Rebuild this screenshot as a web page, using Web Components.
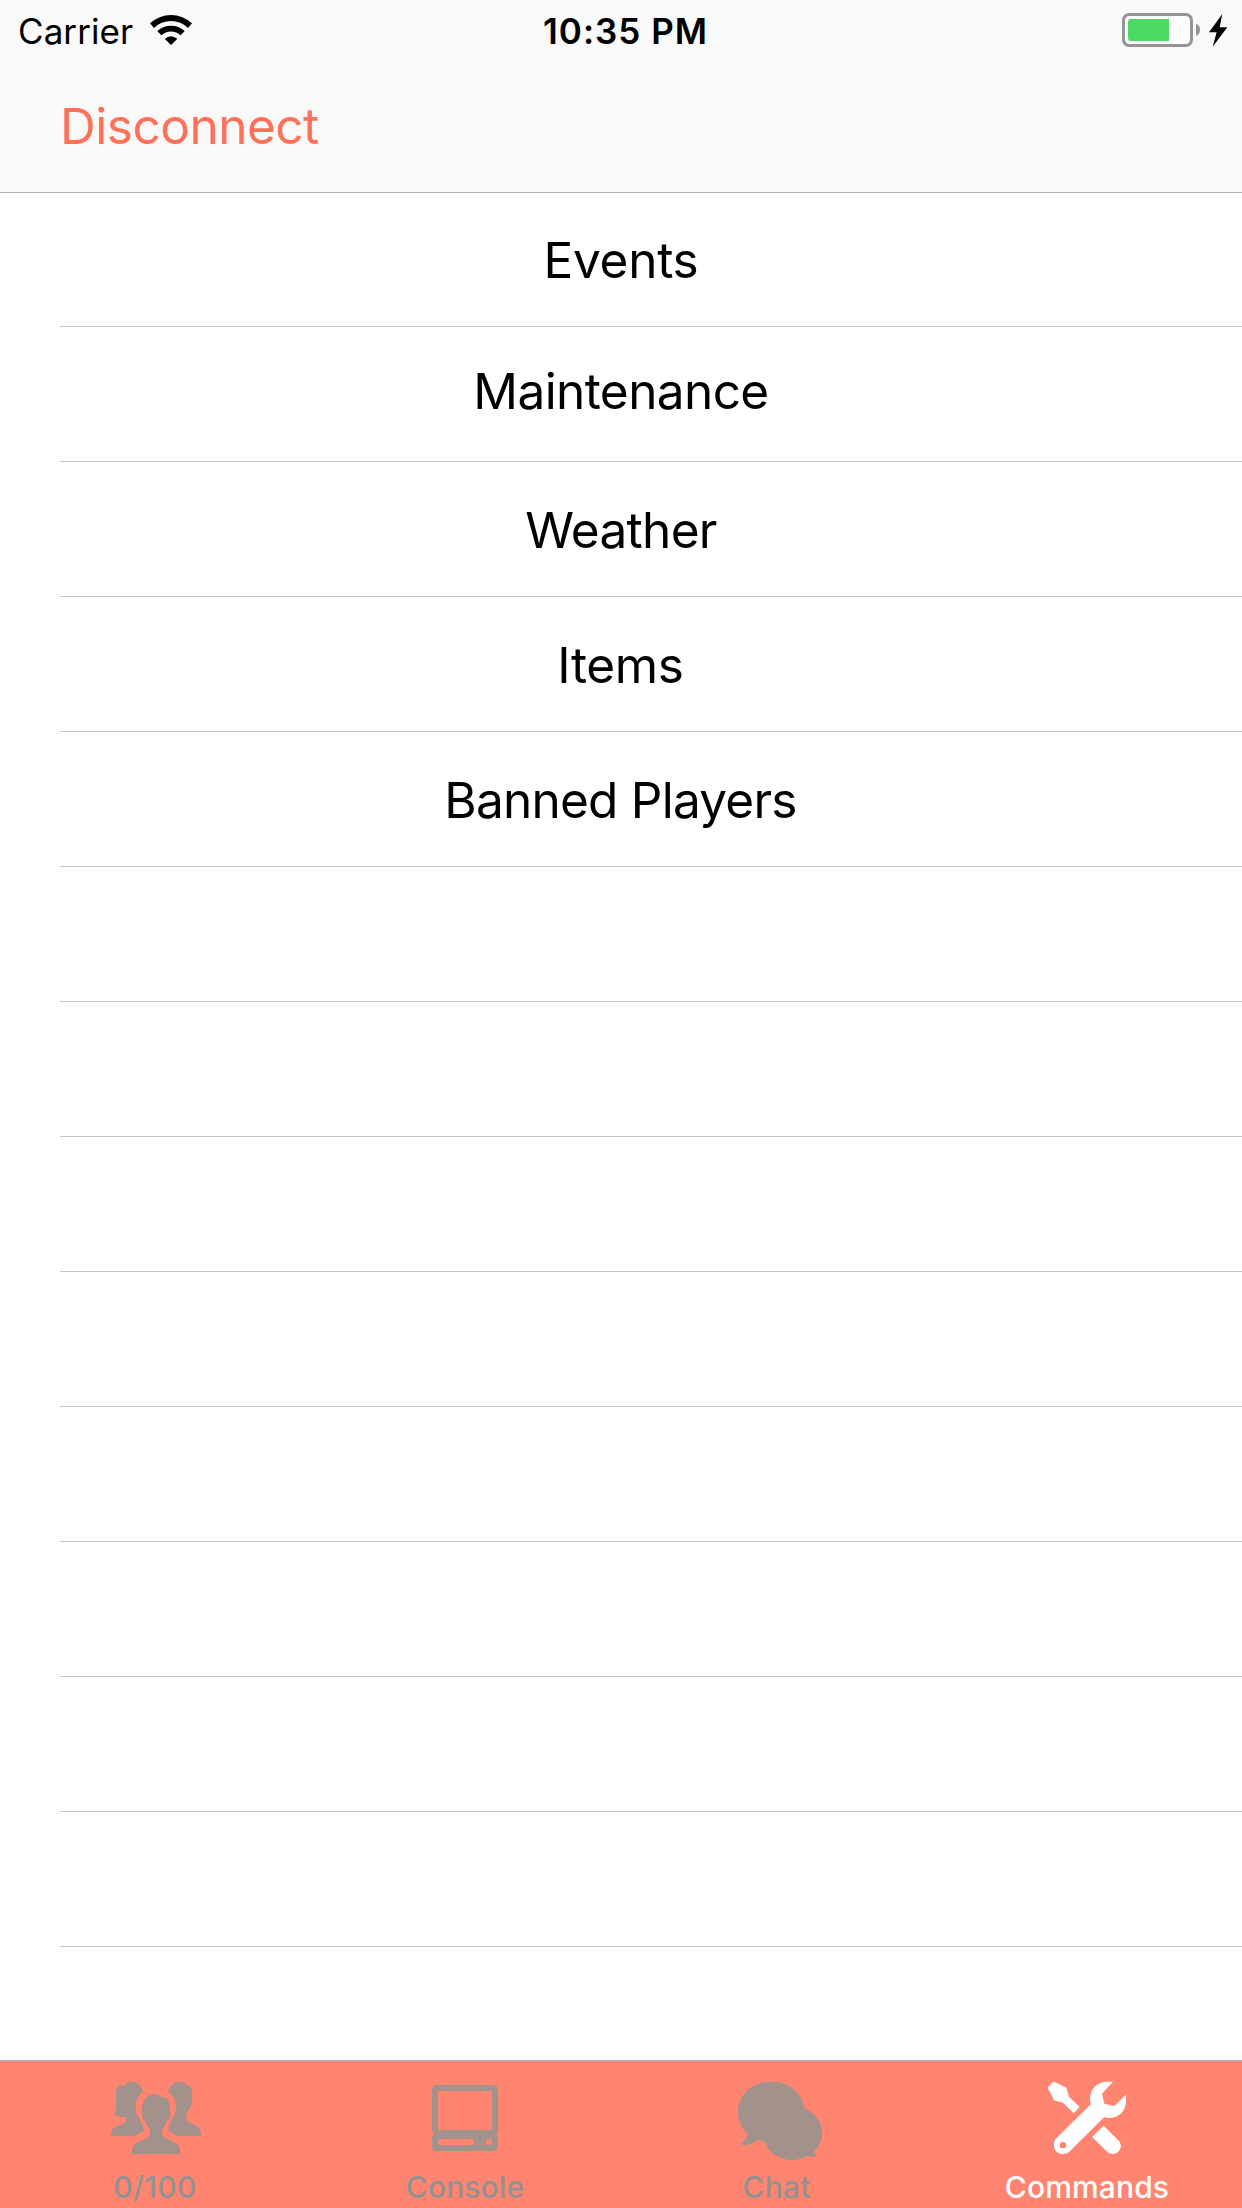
<!DOCTYPE html>
<html lang="en">
<head>
<meta charset="utf-8">
<title>Commands</title>
<style>
body{margin:0;background:#fff;color:#000;font-family:Inter,"Liberation Sans",sans-serif}
</style>
</head>
<body>
<app-screen>
  <status-bar slot="top" carrier="Carrier" time="10:35 PM"></status-bar>
  <nav-bar slot="top">Disconnect</nav-bar>
  <list-row style="--h:134px;--pad:37px;--ls:-.284px">Events</list-row>
  <list-row style="--pad:34px;--ls:-.588px">Maintenance</list-row>
  <list-row style="--ls:-.67px">Weather</list-row>
  <list-row style="--ls:-.36px;--end:61px">Items</list-row>
  <list-row style="--ls:-.753px;--end:61px">Banned Players</list-row>
  <list-row></list-row><list-row></list-row><list-row></list-row><list-row></list-row>
  <list-row></list-row><list-row></list-row><list-row></list-row><list-row></list-row>
  <tab-bar slot="bottom">
    <tab-item icon="people" style="--ls:.357px">0/100</tab-item>
    <tab-item icon="console" style="--ls:.12px">Console</tab-item>
    <tab-item icon="chat" style="--ls:.205px;--nudge:1px">Chat</tab-item>
    <tab-item icon="tools" active style="--ls:.137px">Commands</tab-item>
  </tab-bar>
</app-screen>
<script>
const ICONS={
people:`<svg viewBox="45 90 300 240"><g fill="currentColor">
<path d="M63 258V247C64 239 70 234 82 228L100 221C106 218 108 214 108 209V201C94 203 79 199 73 194C78 184 78 172 78 160V130C78 115 84 107 92 105C98 105 103 106 107 106C110 99 117 95 126 95C143 96 154 107 159 126C144 136 138 150 137 166C136 173 138 179 139 186C140 194 143 199 147 201C149 209 153 218 158 222L162 243C151 247 144 251 137 258Z"/>
<path d="M234 125C239 105 252 95 269 95C278 95 285 98 289 104C299 104 306 113 306 126V149C308 154 307 163 303 167C301 177 294 181 289 191V207C291 215 297 219 304 221L316 226C329 232 333 242 333 258H261C253 253 244 249 235 244L237 223C243 217 247 209 248 202C253 199 254 194 255 188C257 181 258 174 258 167C257 148 249 135 234 125Z"/>
<path d="M126 312V300C127 288 136 280 150 274L169 266C178 262 181 257 180 250V238C173 231 168 222 166 213C160 211 158 205 157 197L155 187C154 158 168 132 194 132C203 132 209 135 213 141C233 141 241 154 240 176V185C243 188 241 199 238 206C236 211 233 213 230 213C228 224 222 233 216 239V250C216 258 221 263 229 266L246 273C262 280 270 289 270 302V312Z"/></g></svg>`,
console:`<svg viewBox="75 90 300 240"><path fill="currentColor" fill-rule="evenodd" d="M142 105H308Q324 105 324 121V240Q324 248 319 252Q324 257 324 265V287Q324 303 308 303H142Q126 303 126 287V265Q126 257 131 252Q126 248 126 240V121Q126 105 142 105ZM144 123V240H306V123ZM153 267A9 9 0 0 0 153 285H243A9 9 0 0 0 243 267ZM297 267A9 9 0 1 0 297 285A9 9 0 1 0 297 267Z"/></svg>`,
chat:`<svg viewBox="48 90 300 240"><path fill="currentColor" d="M114 252C94 236 84 212 84 185C84 134 126 95 183 95C237 95 278 128 282 174C314 186 336 216 336 249C336 273 327 290 312 303C312 308 315 311 318 314C320 319 317 321 311 321C304 321 299 320 293 317C279 326 263 330 246 330C207 330 175 307 161 273L144 269C132 278 116 286 103 286C94 286 91 279 97 275C106 271 113 261 114 252Z"/><path fill="none" stroke="#b98f83" stroke-opacity=".35" stroke-width="2" d="M156 240C161 194 197 164 246 166Q266 167 280 174"/></svg>`,
tools:`<svg viewBox="141 90 300 240"><g fill="currentColor"><path d="M193 95L229 113L237 140L269 171L251 190L219 158L192 151L174 115Q173 111 177 108L188 97Q190 95 193 95Z"/>
<path fill-rule="evenodd" d="M346 95H369L336 131L343 161L373 168L408 134V157C405 184 387 204 359 204C353 204 347 203 342 202L238 305C231 311 221 313 211 311C200 308 192 299 192 287C191 278 193 271 199 265L303 162C301 158 300 153 300 147C300 119 318 99 346 95ZM219 276A9.500 9.500 0 1 0 219 295A9.500 9.500 0 1 0 219 276Z"/>
<path d="M341 227L387 273C395 283 394 296 386 304C377 314 361 314 352 306L306 261Z"/></g></svg>`};
function define(name,html){
  customElements.define(name,class extends HTMLElement{
    constructor(){super();this.attachShadow({mode:'open'})}
    connectedCallback(){this.shadowRoot.innerHTML=typeof html==='function'?html(this):html}
  });
}
define('app-screen',`<style>:host{display:flex;flex-direction:column;width:1242px;height:2208px;overflow:hidden;background:#fff}
header{flex:none;height:192px;background:#f9f9f9;border-bottom:1px solid #b2b2b2}main{flex:1;min-height:0;overflow:hidden}</style>
<header><slot name="top"></slot></header><main><slot></slot></main><slot name="bottom"></slot>`);
define('status-bar',e=>`<style>:host{display:flex;height:60px;box-sizing:border-box;padding:10px 14px 0 18px;font-size:35px;line-height:42px}
.l,.r{flex:1;display:flex}.l{letter-spacing:.075px}.t{font-weight:600;letter-spacing:.997px;padding-left:5px}.r{justify-content:flex-end}svg{display:block;flex:none}
.wifi{margin:5px 0 0 17.100px}.bat{margin-top:3px}</style>
<div class="l"><span>${e.getAttribute('carrier')}</span><svg class="wifi" width="42" height="30" viewBox="450 45 126 90"><path d="M450 70A92 92 0 0 1 576 70L564 84A73 73 0 0 0 462 84ZM472 93A61 61 0 0 1 554 93L542 106A42 42 0 0 0 484 106ZM494 116Q513 101 532 116L513 135Z"/></svg></div>
<div class="t">${e.getAttribute('time')}</div>
<div class="r"><svg class="bat" width="106" height="34" viewBox="66 39 318 102"><rect x="70.500" y="43.500" width="204" height="93" rx="17" fill="#fdfdfd" stroke="#949494" stroke-width="9"/><path fill="#4cd964" d="M94 57H207V123H94Q84 123 84 113V67Q84 57 94 57Z"/><path fill="#949494" d="M288 71Q300 76 300 89.500Q300 103 288 108Z"/><path d="M367 42L327 97H350L338 140L382 82H359Z"/></svg></div>`);
define('nav-bar',`<style>:host{display:flex;padding:36px 0 0 60px;font-size:49.500px;line-height:60px;letter-spacing:-.48px;color:#ff7058}</style><slot></slot>`);
define('list-row',`<style>:host{display:flex;justify-content:center;box-sizing:border-box;height:var(--h,135px);margin-left:60px;padding:var(--pad,38px) var(--end,60px) 0 0;border-bottom:1px solid #c5c5c8;font-size:49.500px;line-height:60px;letter-spacing:var(--ls,0)}</style><slot></slot>`);
define('tab-bar',`<style>:host{flex:none;display:grid;grid-template-columns:310px 310px 312px 310px;height:147px;border-top:1px solid #b2b2b2;background:#ff8570}</style><slot></slot>`);
define('tab-item',e=>`<style>:host{display:flex;flex-direction:column;align-items:center;padding-top:19px;gap:9px;color:#929292;font-size:30px;line-height:36px;font-weight:500;letter-spacing:var(--ls,0)}
:host([active]){color:#fff}svg{display:block;width:100px;height:80px;color:#a3918b}:host([active]) svg{color:#fff}span{padding-left:var(--nudge,0)}</style>
${ICONS[e.getAttribute('icon')]}<span><slot></slot></span>`);
</script>
</body>
</html>
